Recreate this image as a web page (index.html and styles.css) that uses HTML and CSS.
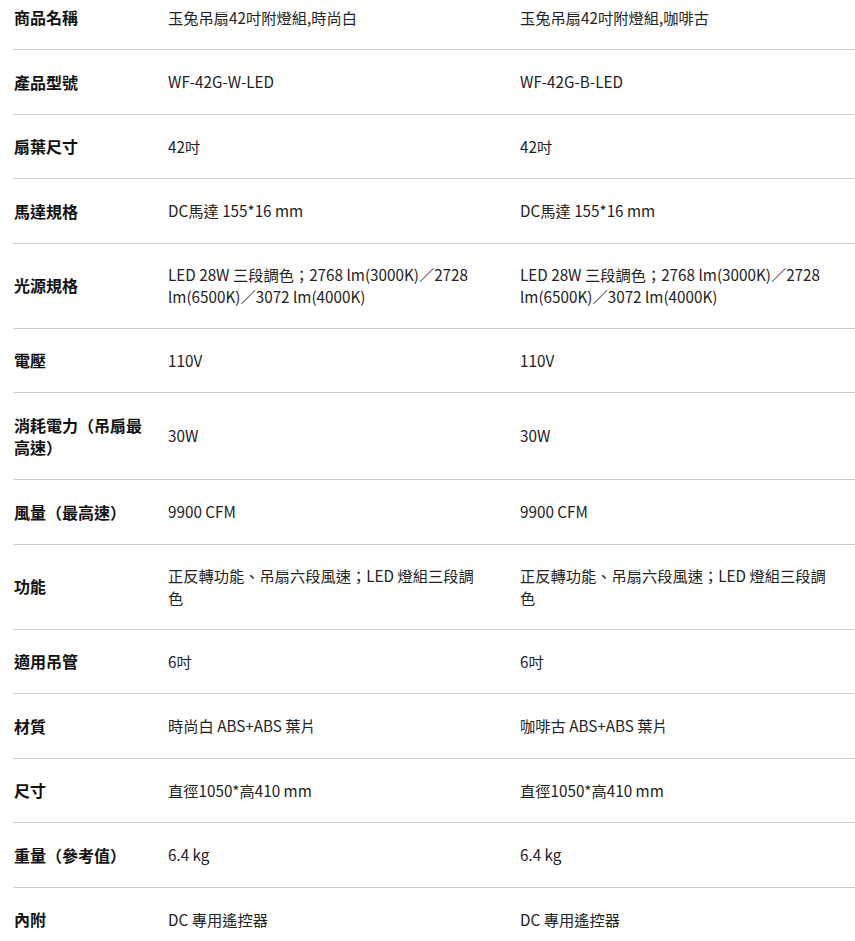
FILE: index.html
```html
<!DOCTYPE html>
<html lang="zh-Hant">
<head>
<meta charset="utf-8">
<title>規格比較</title>
<link rel="stylesheet" href="styles.css">
</head>
<body>
<div class="page">
<table class="spec">
<colgroup><col class="c-label"><col class="c-val"><col class="c-val2"></colgroup>
<tbody>
<tr class="first"><th>商品名稱</th><td>玉兔吊扇42吋附燈組,時尚白</td><td>玉兔吊扇42吋附燈組,咖啡古</td></tr>
<tr><th>產品型號</th><td>WF-42G-W-LED</td><td>WF-42G-B-LED</td></tr>
<tr><th>扇葉尺寸</th><td>42吋</td><td>42吋</td></tr>
<tr><th>馬達規格</th><td>DC馬達 155*16 mm</td><td>DC馬達 155*16 mm</td></tr>
<tr><th>光源規格</th><td>LED 28W 三段調色；2768 lm(3000K)／2728 lm(6500K)／3072 lm(4000K)</td><td>LED 28W 三段調色；2768 lm(3000K)／2728 lm(6500K)／3072 lm(4000K)</td></tr>
<tr><th>電壓</th><td>110V</td><td>110V</td></tr>
<tr><th>消耗電力（吊扇最高速）</th><td>30W</td><td>30W</td></tr>
<tr><th>風量（最高速）</th><td>9900 CFM</td><td>9900 CFM</td></tr>
<tr><th>功能</th><td>正反轉功能、吊扇六段風速；LED 燈組三段調色</td><td>正反轉功能、吊扇六段風速；LED 燈組三段調色</td></tr>
<tr><th>適用吊管</th><td>6吋</td><td>6吋</td></tr>
<tr><th>材質</th><td>時尚白 ABS+ABS 葉片</td><td>咖啡古 ABS+ABS 葉片</td></tr>
<tr><th>尺寸</th><td>直徑1050*高410 mm</td><td>直徑1050*高410 mm</td></tr>
<tr><th>重量（參考值）</th><td>6.4 kg</td><td>6.4 kg</td></tr>
<tr><th>內附</th><td>DC 專用遙控器</td><td>DC 專用遙控器</td></tr>
</tbody>
</table>
</div>
</body>
</html>
```
FILE: styles.css
```css
html, body {
  margin: 0;
  padding: 0;
  background: #fff;
  overflow: hidden;
}
body {
  font-family: "Noto Sans CJK TC", "Noto Sans", sans-serif;
  color: #222;
}
.page {
  padding-left: 13px;
  margin-top: -13.5px;
}
.spec {
  border-collapse: collapse;
  table-layout: fixed;
  width: 842px;
}
.c-label { width: 133px; }
.c-val { width: 352px; }
.c-val2 { width: 357px; }
.spec th,
.spec td {
  border-bottom: 1px solid #cfcfcf;
  padding: 20.5px 0;
  vertical-align: middle;
  text-align: left;
}
.spec .first th,
.spec .first td {
  padding-top: 19.5px;
}
.spec th {
  font-size: 16px;
  font-weight: 700;
  line-height: 22.5px;
  color: #111;
  padding-left: 1px;
}
.spec td {
  font-size: 15.25px;
  font-weight: 400;
  line-height: 21.5px;
  padding-left: 22px;
  padding-right: 22px;
  color: #222;
}
.spec td:last-child { padding-right: 18px; }
```
